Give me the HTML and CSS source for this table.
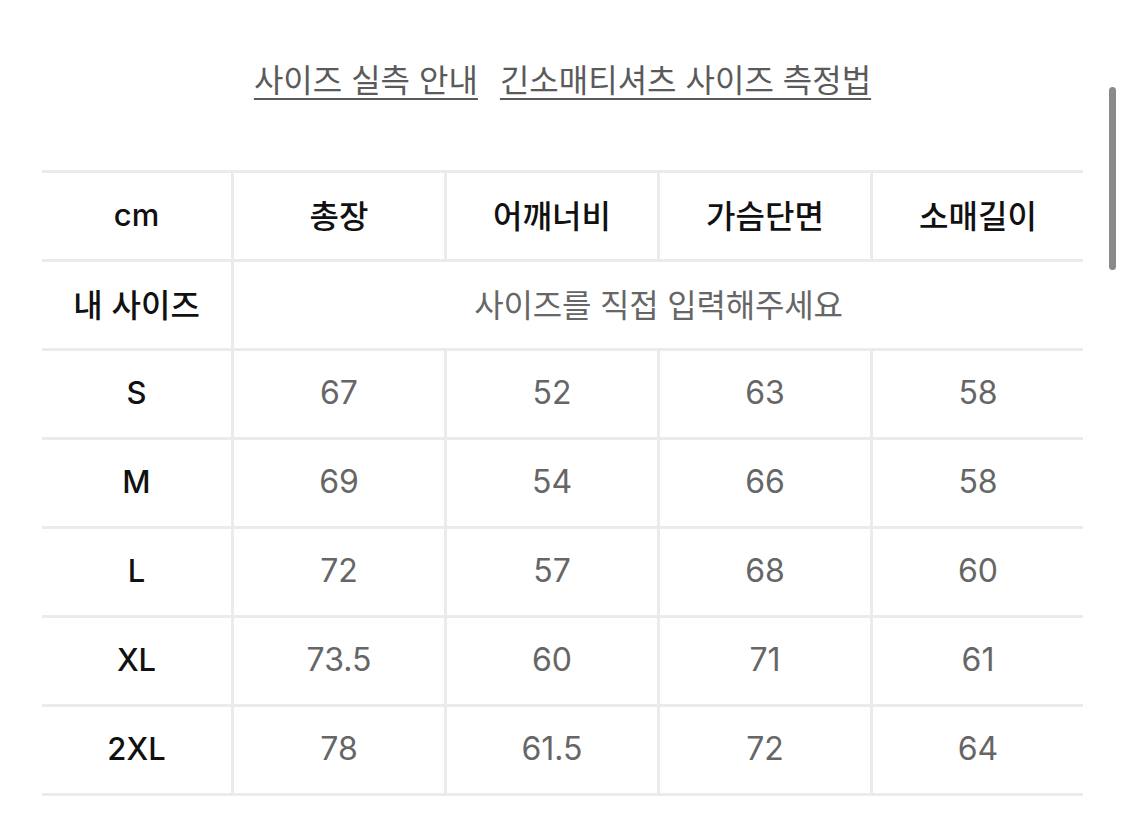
FILE: index.html
```html
<!DOCTYPE html>
<html lang="ko">
<head>
<meta charset="utf-8">
<link rel="stylesheet" href="styles.css">
</head>
<body>
<div class="page">
  <nav class="links">
    <a class="link" href="#">사이즈 실측 안내</a>
    <a class="link" href="#">긴소매티셔츠 사이즈 측정법</a>
  </nav>
  <div class="size-table">
    <div class="cell label first">cm</div>
    <div class="cell head">총장</div>
    <div class="cell head">어깨너비</div>
    <div class="cell head">가슴단면</div>
    <div class="cell head">소매길이</div>

    <div class="cell head first">내 사이즈</div>
    <div class="cell input span4">사이즈를 직접 입력해주세요</div>

    <div class="cell label first">S</div>
    <div class="cell val">67</div><div class="cell val">52</div><div class="cell val">63</div><div class="cell val">58</div>

    <div class="cell label first">M</div>
    <div class="cell val">69</div><div class="cell val">54</div><div class="cell val">66</div><div class="cell val">58</div>

    <div class="cell label first">L</div>
    <div class="cell val">72</div><div class="cell val">57</div><div class="cell val">68</div><div class="cell val">60</div>

    <div class="cell label first">XL</div>
    <div class="cell val">73.5</div><div class="cell val">60</div><div class="cell val">71</div><div class="cell val">61</div>

    <div class="cell label first last">2XL</div>
    <div class="cell val last">78</div><div class="cell val last">61.5</div><div class="cell val last">72</div><div class="cell val last">64</div>
  </div>
</div>
<div class="scrollbar"></div>
</body>
</html>
```
FILE: styles.css
```css
html, body {
  margin: 0;
  padding: 0;
  background: #ffffff;
}
body {
  width: 1125px;
  height: 832px;
  overflow: hidden;
  font-family: "Inter", "Noto Sans CJK KR", sans-serif;
}
.page {
  padding: 0 42px;
}
.links {
  display: flex;
  justify-content: center;
  gap: 22px;
  padding-top: 54px;
  height: 170px;
  box-sizing: border-box;
}
.link {
  font-family: "Noto Sans CJK KR", sans-serif;
  font-size: 32px;
  line-height: 48px;
  height: 48px;
  color: #5a5a5a;
  text-decoration: underline;
  text-decoration-thickness: 2px;
  text-underline-offset: 6px;
}
.size-table {
  display: grid;
  grid-template-columns: 189px repeat(4, 213px);
  grid-auto-rows: 89px;
  width: 1041px;
}
.cell {
  box-sizing: border-box;
  border-top: 3px solid #ebebeb;
  border-left: 3px solid #ebebeb;
  display: flex;
  align-items: center;
  justify-content: center;
  padding-bottom: 4px;
}
.cell.first {
  border-left: none;
}
.cell.last {
  border-bottom: 3px solid #ebebeb;
  height: 92px;
}
.head {
  font-family: "Noto Sans CJK KR", sans-serif;
  font-size: 32px;
  font-weight: 500;
  color: #111;
}
.input {
  grid-column: span 4;
  font-family: "Noto Sans CJK KR", sans-serif;
  font-size: 32px;
  color: #666;
  letter-spacing: -0.2px;
}
.label {
  font-family: "Inter", sans-serif;
  font-size: 31px;
  font-weight: 500;
  color: #111;
}
.val {
  font-family: "Inter", sans-serif;
  font-size: 32px;
  font-weight: 400;
  color: #666;
}
.scrollbar {
  position: absolute;
  left: 1109px;
  top: 87px;
  width: 7px;
  height: 183px;
  border-radius: 4px;
  background: #8a8a8a;
}
```
